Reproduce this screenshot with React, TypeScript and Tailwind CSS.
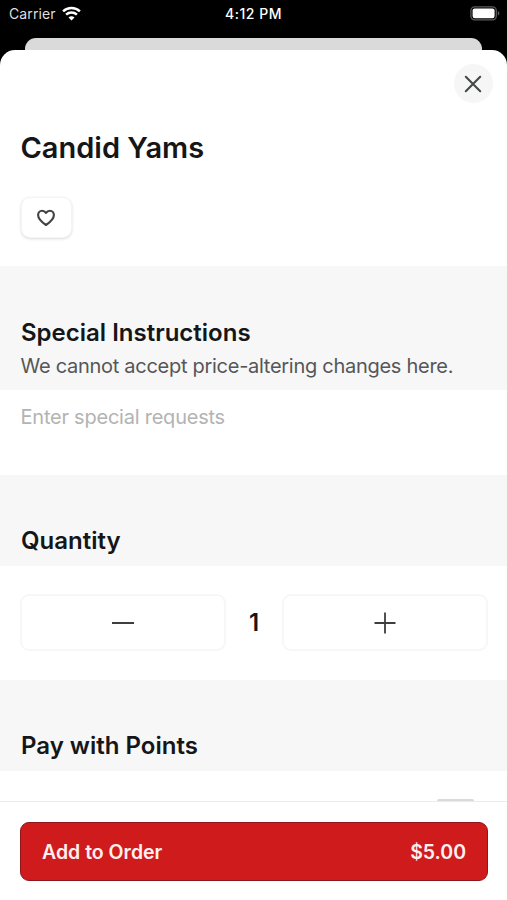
import React from "react";

function WifiIcon() {
  return (
    <svg width="19" height="15" viewBox="0 0 19 15" fill="none" stroke="#fff" strokeWidth="2.5" className="-mt-px">
      <path d="M1.1 5.3C5.8.9 13.2.9 17.9 5.3" />
      <path d="M4.1 8.7C7.1 5.9 11.9 5.9 14.9 8.7" />
      <path d="M9.5 14.5L6.5 11.4C8.2 9.8 10.8 9.8 12.5 11.4Z" fill="#fff" stroke="none" />
    </svg>
  );
}

function BatteryIcon() {
  return (
    <svg width="30" height="15" viewBox="0 0 30 15">
      <rect x="0.9" y="0.8" width="25.4" height="13" rx="3.8" fill="none" stroke="#5c5c5c" strokeWidth="1.3" />
      <rect x="2.6" y="2.4" width="22" height="9.8" rx="2.2" fill="#fff" />
      <path d="M27.8 5v4.6c1-.4 1.6-1.3 1.6-2.3S28.8 5.4 27.8 5z" fill="#5c5c5c" />
    </svg>
  );
}

function StatusBar() {
  return (
    <div className="grid h-[38px] grid-cols-3 items-start pt-[5px] pr-[7px] pl-[9px] text-white">
      <div className="flex items-center gap-[6px]">
        <span className="text-[14px] leading-[18px] tracking-[0.1px] text-[#dedede]">Carrier</span>
        <WifiIcon />
      </div>
      <div className="-ml-[2px] text-center text-[14px] leading-[18px] font-medium tracking-[0.5px]">4:12 PM</div>
      <div className="flex justify-end pt-px">
        <BatteryIcon />
      </div>
    </div>
  );
}

function SectionTitle({ children }: { children: React.ReactNode }) {
  return <h2 className="text-[24px] leading-[32px] font-semibold text-[#151617]">{children}</h2>;
}

export default function App() {
  return (
    <div className="flex h-[900px] w-[507px] flex-col overflow-hidden bg-black font-['Inter',sans-serif]">
      <StatusBar />
      <div className="mx-[25px] h-3 shrink-0 rounded-t-[11px] bg-[#dadada]" />
      <main className="flex min-h-0 flex-1 flex-col rounded-t-[15px] bg-white">
        <section className="h-[216px] shrink-0 px-[20.5px] pt-[14px]">
          <div className="-mr-[6px] flex justify-end">
            <button aria-label="Close" className="flex size-[39px] items-center justify-center rounded-full bg-[#f6f6f6]">
              <svg width="18" height="18" viewBox="0 0 18 18" stroke="#46484a" strokeWidth="2.1" strokeLinecap="round">
                <path d="M1.8 1.8L16.2 16.2M16.2 1.8L1.8 16.2" />
              </svg>
            </button>
          </div>
          <h1 className="mt-[25px] text-[29px] leading-[40px] font-semibold text-[#151617]">Candid Yams</h1>
          <button aria-label="Favorite" className="mt-[29px] flex h-[41px] w-[51px] items-center justify-center rounded-[9px] border border-[#f4f4f4] bg-white shadow-[0_1px_3px_rgba(0,0,0,0.14)]">
            <svg width="20" height="18" viewBox="0 0 20 18" fill="none" stroke="#414244" strokeWidth="2.1" strokeLinejoin="round">
              <path d="M10 16C7.400 14.300 2.100 10.300 2.100 6.100C2.100 3.600 3.900 1.700 6.100 1.700C7.700 1.700 9.100 2.500 10 3.900C10.900 2.500 12.300 1.700 13.900 1.700C16.100 1.700 17.900 3.600 17.900 6.100C17.900 10.300 12.600 14.300 10 16Z" />
            </svg>
          </button>
        </section>
        <header className="h-[124px] shrink-0 bg-[#f7f7f7] px-[21px] pt-[51px]">
          <SectionTitle>Special Instructions</SectionTitle>
          <p className="-ml-[0.5px] mt-[3px] text-[20px] leading-[28px] tracking-[-0.28px] whitespace-nowrap text-[#555657]">We cannot accept price-altering changes here.</p>
        </header>
        <div className="h-[85px] shrink-0 px-[20.5px] pt-[13px] text-[20px] leading-[28px] tracking-[-0.23px] text-[#b3b3b3]">Enter special requests</div>
        <header className="h-[91px] shrink-0 bg-[#f7f7f7] px-[21px] pt-[50px]">
          <SectionTitle>Quantity</SectionTitle>
        </header>
        <div className="flex h-[114px] shrink-0 items-start pt-7 pr-[19px] pl-5">
          <button aria-label="Decrease" className="flex h-[57px] w-[206px] items-center justify-center rounded-[9px] border-2 border-[#f7f7f7]">
            <svg width="22" height="22" viewBox="0 0 22 22" stroke="#3d3e40" strokeWidth="2">
              <path d="M0 11H22" />
            </svg>
          </button>
          <span className="flex-1 pt-[13px] text-center text-[24px] leading-[32px] font-semibold text-[#151617]">1</span>
          <button aria-label="Increase" className="flex h-[57px] w-[206px] items-center justify-center rounded-[9px] border-2 border-[#f7f7f7]">
            <svg width="22" height="22" viewBox="0 0 22 22" stroke="#3d3e40" strokeWidth="1.8">
              <path d="M.5 11H21.5M11 .5V21.5" />
            </svg>
          </button>
        </div>
        <header className="h-[91px] shrink-0 bg-[#f7f7f7] px-[21px] pt-[50px]">
          <SectionTitle>Pay with Points</SectionTitle>
        </header>
        <div className="flex h-[30px] shrink-0 items-end justify-end overflow-hidden pr-[33px]">
          <div className="h-[2px] w-[37px] rounded-t-full bg-[#dadada]" />
        </div>
        <footer className="flex-1 border-t border-[#ebebeb] px-5 pt-5">
          <button className="flex h-[59px] w-[468px] items-center justify-between rounded-[9px] border border-[#8d171c] bg-[#cf1b1c] px-[21px] pt-[2px] text-[19.5px] font-semibold text-[#fff0ef]">
            <span>Add to Order</span>
            <span>$5.00</span>
          </button>
        </footer>
      </main>
    </div>
  );
}
